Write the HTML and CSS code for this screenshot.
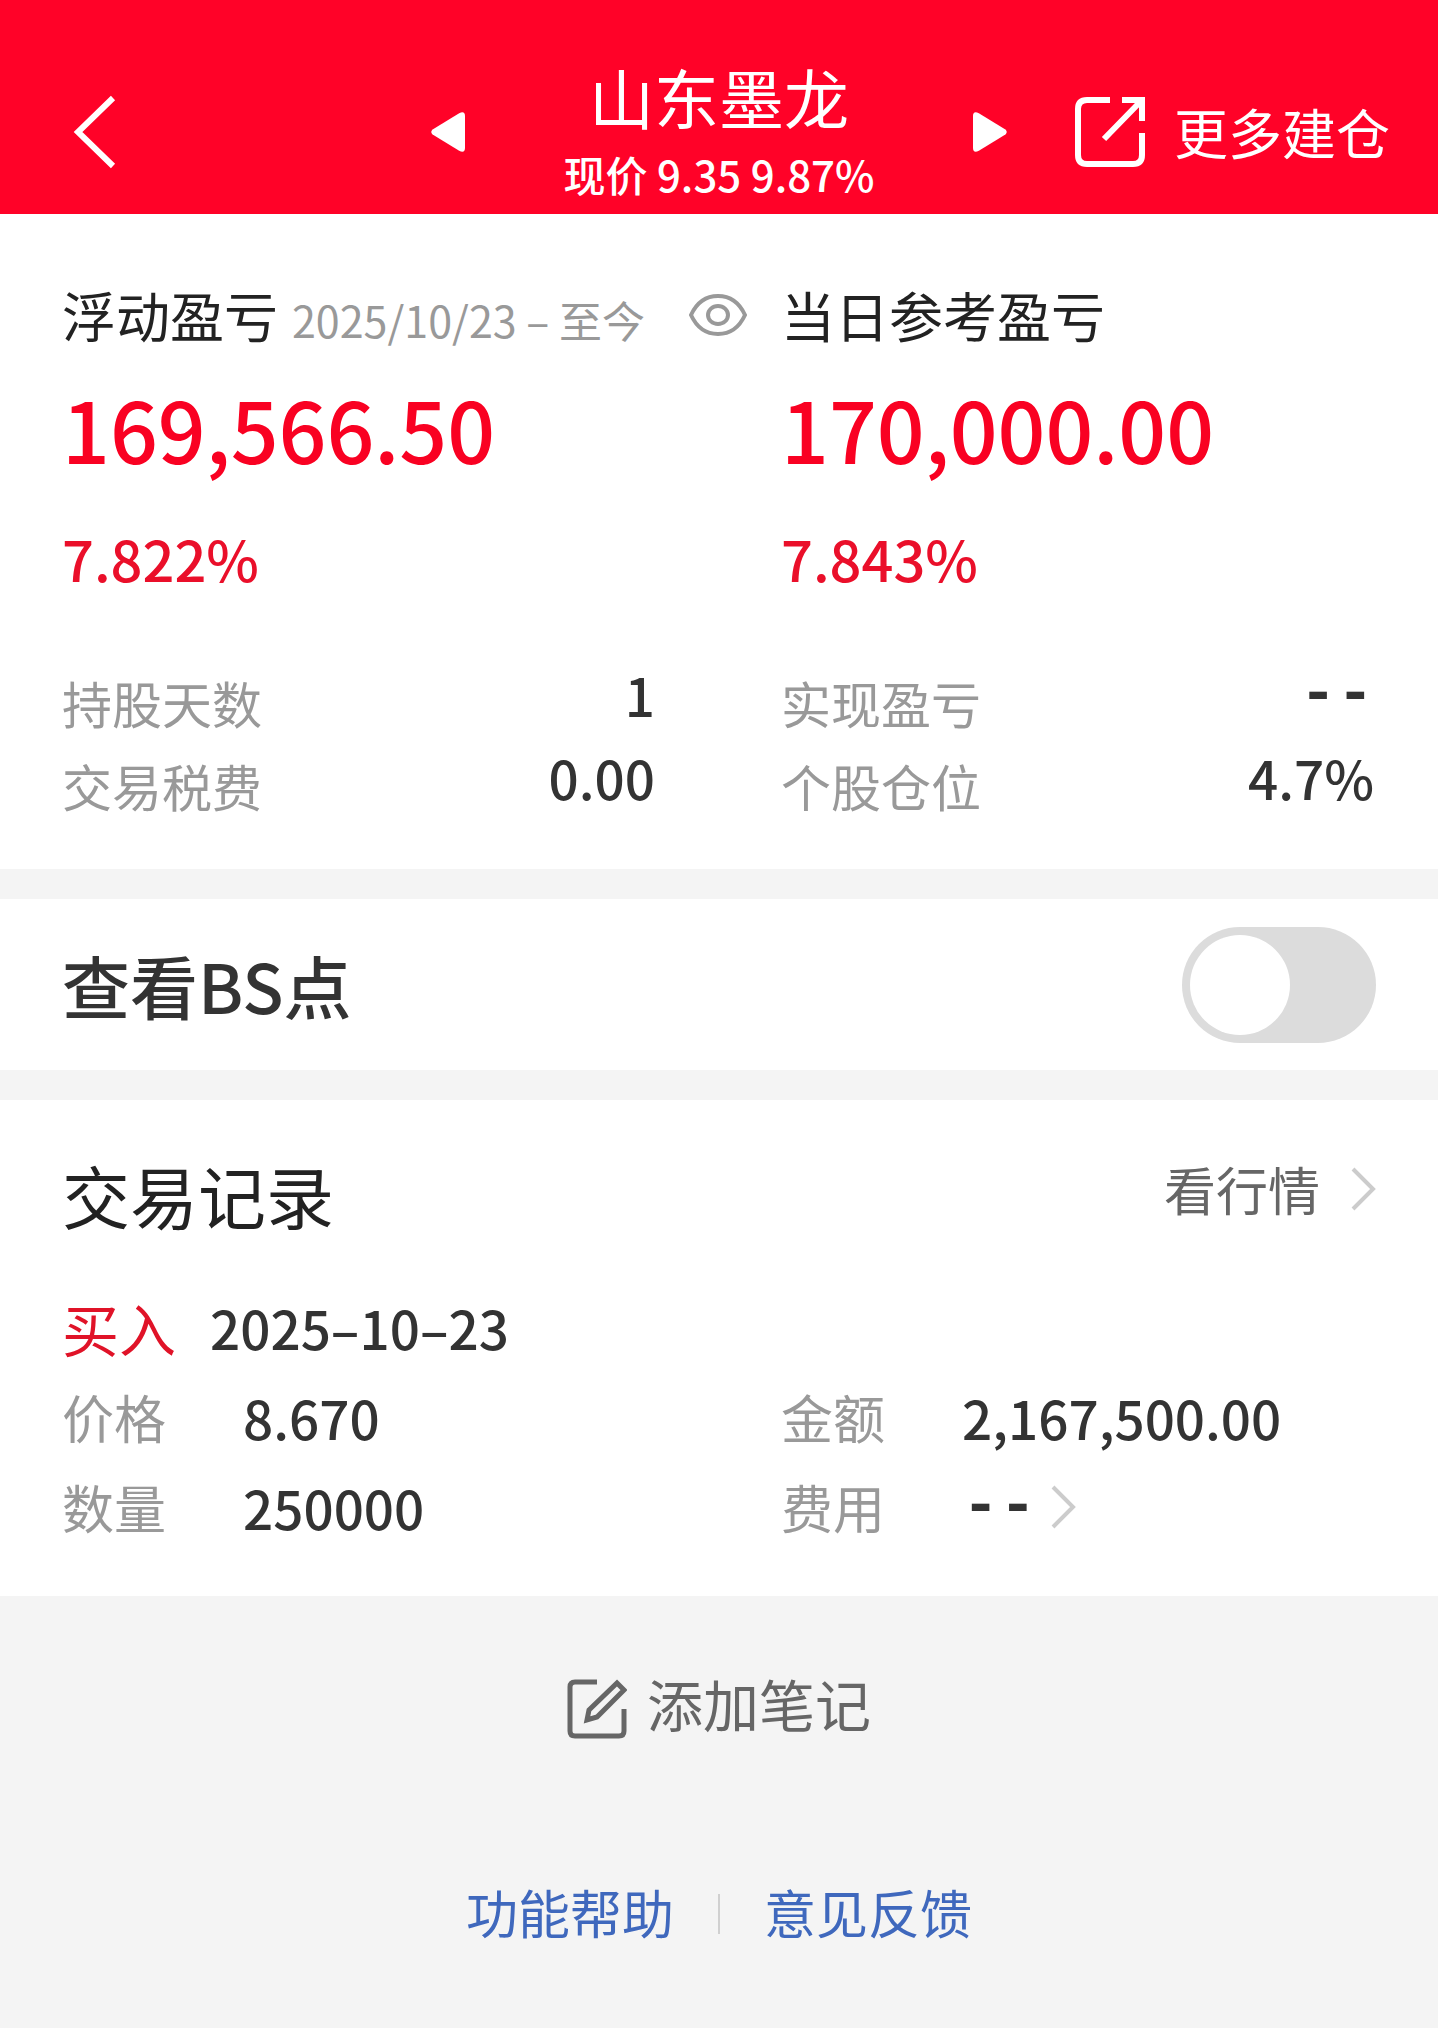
FILE: index.html
```html
<!DOCTYPE html>
<html lang="zh-CN">
<head>
    <meta charset="UTF-8">
    <meta name="viewport" content="width=device-width, initial-scale=1.0">
    <title>山东墨龙 - 持仓详情</title>
    <link rel="stylesheet" href="styles.css">
</head>
<body>
    <header>
        <button class="icon-btn back-btn" aria-label="返回">
            <svg width="44" height="76" viewBox="0 0 44 76" fill="none" stroke="currentColor" stroke-width="6"><path d="M41 4L6 38L41 72"/></svg>
        </button>
        <div class="stock-switch">
            <button class="icon-btn" aria-label="上一只">
                <svg width="34" height="40" viewBox="0 0 32 40" preserveAspectRatio="none" fill="currentColor"><path d="M26.500 1.200Q32 -1.500 32 4V36Q32 41.500 26.500 38.800L1.500 22.500Q-1 20 1.500 17.500Z"/></svg>
            </button>
            <div class="stock-title">
                <h1>山东墨龙</h1>
                <p>现价 9.35 9.87%</p>
            </div>
            <button class="icon-btn" aria-label="下一只">
                <svg width="34" height="40" viewBox="0 0 32 40" preserveAspectRatio="none" fill="currentColor"><path d="M5.500 1.200Q0 -1.500 0 4V36Q0 41.500 5.500 38.800L30.500 22.500Q33 20 30.500 17.500Z"/></svg>
            </button>
        </div>
        <a class="more-link" href="#">
            <svg width="72" height="72" viewBox="0 0 72 72" fill="none" stroke="currentColor" stroke-width="6"><path d="M36 4H13Q4 4 4 13V59Q4 68 13 68H59Q68 68 68 59V37"/><path d="M48 4H68V25M67 5L30 43"/></svg>
            更多建仓
        </a>
    </header>

    <main>
        <section class="summary">
            <div class="summary-col">
                <div class="summary-title">
                    <h2>浮动盈亏</h2>
                    <span class="period">2025/10/23 – 至今</span>
                    <button class="icon-btn eye-btn" aria-label="隐藏金额">
                        <svg width="58" height="42" viewBox="0 0 58 42" fill="none" stroke="currentColor" stroke-width="4"><path d="M2 21C8 8 18 2 29 2S50 8 56 21C50 34 40 40 29 40S8 34 2 21Z"/><ellipse cx="29" cy="21" rx="10" ry="9"/></svg>
                    </button>
                </div>
                <p class="amount">169,566.50</p>
                <p class="percent">7.822%</p>
                <dl class="stats">
                    <div><dt>持股天数</dt><dd>1</dd></div>
                    <div><dt>交易税费</dt><dd>0.00</dd></div>
                </dl>
            </div>
            <div class="summary-col">
                <div class="summary-title">
                    <h2>当日参考盈亏</h2>
                </div>
                <p class="amount">170,000.00</p>
                <p class="percent">7.843%</p>
                <dl class="stats">
                    <div><dt>实现盈亏</dt><dd class="empty">--</dd></div>
                    <div><dt>个股仓位</dt><dd>4.7%</dd></div>
                </dl>
            </div>
        </section>

        <section class="bs-row">
            <label for="bs-toggle">查看BS点</label>
            <input type="checkbox" id="bs-toggle" class="toggle">
        </section>

        <section class="records">
            <div class="records-header">
                <h2>交易记录</h2>
                <a href="#">看行情
                    <svg class="chevron" width="26" height="44" viewBox="0 0 26 44" fill="none" stroke="currentColor" stroke-width="4"><path d="M3 2L23 22L3 42"/></svg>
                </a>
            </div>
            <div class="record-type">
                <span class="buy">买入</span>
                <time datetime="2025-10-23">2025–10–23</time>
            </div>
            <dl class="record-grid">
                <div><dt>价格</dt><dd>8.670</dd></div>
                <div><dt>金额</dt><dd>2,167,500.00</dd></div>
                <div><dt>数量</dt><dd>250000</dd></div>
                <div>
                    <dt>费用</dt>
                    <dd class="empty">--
                        <svg class="chevron" width="26" height="44" viewBox="0 0 26 44" fill="none" stroke="currentColor" stroke-width="4"><path d="M3 2L23 22L3 42"/></svg>
                    </dd>
                </div>
            </dl>
        </section>
    </main>

    <footer>
        <button class="note-btn">
            <svg width="60" height="60" viewBox="0 0 60 60" fill="none" stroke="currentColor" stroke-width="5"><path d="M30 3H8Q3 3 3 8V52Q3 57 8 57H52Q57 57 57 52V30"/><path d="M50 4L57 11L30 38L20 41L22 31Z"/></svg>
            添加笔记
        </button>
        <nav class="footer-links">
            <a href="#">功能帮助</a>
            <a href="#">意见反馈</a>
        </nav>
    </footer>
</body>
</html>
```
FILE: styles.css
```css
* {
    box-sizing: border-box;
}
body {
    font-family: "Noto Sans CJK SC", sans-serif;
    margin: 0;
    background-color: #f4f4f4;
    color: #333;
}
h1, h2, p, dl, dd {
    margin: 0;
    font-weight: normal;
}
a {
    text-decoration: none;
}
svg {
    display: block;
    flex: none;
}
button {
    font-family: inherit;
    background: none;
    border: none;
    padding: 0;
    cursor: pointer;
}
.icon-btn {
    color: inherit;
    flex: none;
}

/* Header */
header {
    background-color: #ff0228;
    color: white;
    padding: 54px 48px 4px;
    display: grid;
    grid-template-columns: 1fr auto 1fr;
    align-items: center;
}
.back-btn {
    justify-self: start;
    padding-left: 24px;
}
.stock-switch {
    display: flex;
    align-items: center;
    gap: 98px;
}
.stock-title {
    text-align: center;
    white-space: nowrap;
}
.stock-title h1 {
    font-size: 65px;
    line-height: 84px;
}
.stock-title p {
    font-size: 42px;
    font-weight: 500;
    line-height: 72px;
}
.more-link {
    justify-self: end;
    display: flex;
    align-items: center;
    gap: 28px;
    color: white;
    font-size: 54px;
    line-height: 72px;
    white-space: nowrap;
}

/* Profit summary */
.summary {
    background: white;
    display: grid;
    grid-template-columns: 1fr 1fr;
    padding: 62px 0 42px;
}
.summary-col {
    padding-left: 62px;
    min-width: 0;
}
.summary-title {
    display: flex;
    align-items: baseline;
    white-space: nowrap;
}
.summary-title h2 {
    font-size: 54px;
    line-height: 78px;
    color: #222;
}
.period {
    font-size: 43px;
    color: #999;
    margin-left: 14px;
}
.eye-btn {
    align-self: center;
    color: #999;
    margin-left: 44px;
}
.amount {
    font-size: 84px;
    font-weight: 500;
    line-height: 140px;
    color: #f90122;
    margin-top: 4px;
}
.percent {
    font-size: 56px;
    font-weight: 500;
    line-height: 80px;
    color: #ea0f2a;
    margin: 20px 0 63px;
}
.stats {
    padding-right: 64px;
}
.stats div {
    display: flex;
    justify-content: space-between;
    align-items: flex-start;
}
.stats dt {
    font-size: 50px;
    line-height: 83px;
    color: #999;
}
.stats dd {
    font-size: 53px;
    font-weight: 500;
    line-height: 67px;
}

/* BS switch */
.bs-row {
    background: white;
    margin: 30px 0;
    padding: 28px 62px 27px;
    display: flex;
    justify-content: space-between;
    align-items: center;
}
.bs-row label {
    font-size: 68px;
    font-weight: 500;
    line-height: 96px;
}
.toggle {
    appearance: none;
    margin: 0;
    width: 194px;
    height: 116px;
    border-radius: 58px;
    background: #dcdcdc;
    padding: 8px;
    cursor: pointer;
}
.toggle::before {
    content: "";
    display: block;
    width: 100px;
    height: 100px;
    border-radius: 50%;
    background: white;
}
.toggle:checked {
    background: #ff0228;
}
.toggle:checked::before {
    margin-left: auto;
}

/* Trade records */
.records {
    background: white;
    padding: 47px 0 44px;
}
.records-header {
    display: flex;
    justify-content: space-between;
    align-items: flex-start;
    padding: 0 62px;
}
.records-header h2 {
    font-size: 68px;
    line-height: 96px;
    color: #222;
}
.records-header a {
    display: flex;
    align-items: center;
    gap: 30px;
    font-size: 52px;
    line-height: 84px;
    color: #666;
}
.chevron {
    color: #ccc;
}
.record-type {
    display: flex;
    gap: 34px;
    padding: 0 62px;
    margin-top: 39px;
    line-height: 90px;
}
.buy {
    font-size: 57px;
    color: #e01328;
}
.record-type time {
    font-size: 53px;
    font-weight: 500;
}
.record-grid {
    display: grid;
    grid-template-columns: 1fr 1fr;
}
.record-grid div {
    display: flex;
    padding-left: 62px;
    line-height: 90px;
}
.record-grid dt {
    width: 181px;
    font-size: 52px;
    color: #999;
}
.record-grid dd {
    display: flex;
    align-items: center;
    gap: 14px;
    font-size: 53px;
    font-weight: 500;
}
/* placeholder for values not available yet */
.stats .empty,
.record-grid .empty {
    font-family: "Liberation Mono", monospace;
    font-size: 62px;
    font-weight: bold;
}

/* Footer */
footer {
    padding: 71px 62px 80px;
    display: flex;
    flex-direction: column;
    align-items: center;
}
.note-btn {
    display: flex;
    align-items: flex-end;
    gap: 20px;
    font-size: 56px;
    line-height: 72px;
    color: #666;
}
.footer-links {
    display: flex;
    align-items: center;
    margin-top: 143px;
}
.footer-links a {
    font-size: 52px;
    line-height: 60px;
    color: #3f68bd;
}
.footer-links a + a::before {
    content: "";
    display: inline-block;
    width: 2px;
    height: 40px;
    margin: 0 44px;
    background: #d0d0d0;
}
```
